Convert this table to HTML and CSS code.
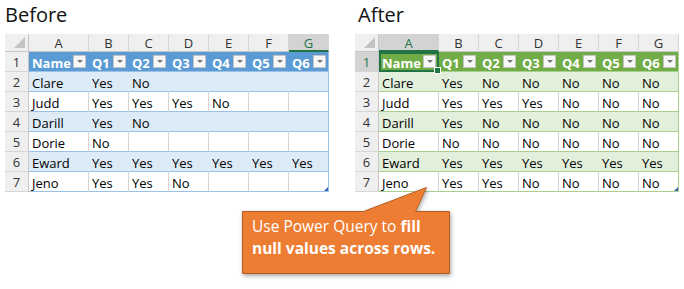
FILE: index.html
```html
<!DOCTYPE html>
<html>
<head>
<meta charset="utf-8">
<link rel="stylesheet" href="styles.css">
</head>
<body>
<div class="page">
  <section class="panel">
    <h2 class="title">Before</h2>
    <div class="sheet blue">
      <div class="corner"></div>
      <div class="ch">A</div><div class="ch">B</div><div class="ch">C</div><div class="ch">D</div><div class="ch">E</div><div class="ch">F</div><div class="ch sel">G</div>

      <div class="rh">1</div>
      <div class="c hd">Name<span class="dd"></span></div><div class="c hd">Q1<span class="dd"></span></div><div class="c hd">Q2<span class="dd"></span></div><div class="c hd">Q3<span class="dd"></span></div><div class="c hd">Q4<span class="dd"></span></div><div class="c hd">Q5<span class="dd"></span></div><div class="c hd last">Q6<span class="dd"></span></div>

      <div class="rh">2</div>
      <div class="c band">Clare</div><div class="c band">Yes</div><div class="c band">No</div><div class="c band"></div><div class="c band"></div><div class="c band"></div><div class="c band last"></div>

      <div class="rh">3</div>
      <div class="c">Judd</div><div class="c">Yes</div><div class="c">Yes</div><div class="c">Yes</div><div class="c">No</div><div class="c"></div><div class="c last"></div>

      <div class="rh">4</div>
      <div class="c band">Darill</div><div class="c band">Yes</div><div class="c band">No</div><div class="c band"></div><div class="c band"></div><div class="c band"></div><div class="c band last"></div>

      <div class="rh">5</div>
      <div class="c">Dorie</div><div class="c">No</div><div class="c"></div><div class="c"></div><div class="c"></div><div class="c"></div><div class="c last"></div>

      <div class="rh">6</div>
      <div class="c band">Eward</div><div class="c band">Yes</div><div class="c band">Yes</div><div class="c band">Yes</div><div class="c band">Yes</div><div class="c band">Yes</div><div class="c band last">Yes</div>

      <div class="rh">7</div>
      <div class="c">Jeno</div><div class="c">Yes</div><div class="c">Yes</div><div class="c">No</div><div class="c"></div><div class="c"></div><div class="c last corner-cell"></div>
    </div>
  </section>

  <section class="panel">
    <h2 class="title after">After</h2>
    <div class="sheet green">
      <div class="corner"></div>
      <div class="ch sel">A</div><div class="ch">B</div><div class="ch">C</div><div class="ch">D</div><div class="ch">E</div><div class="ch">F</div><div class="ch">G</div>

      <div class="rh selrow">1</div>
      <div class="c hd active">Name<span class="dd"></span><span class="handle"></span></div><div class="c hd">Q1<span class="dd"></span></div><div class="c hd">Q2<span class="dd"></span></div><div class="c hd">Q3<span class="dd"></span></div><div class="c hd">Q4<span class="dd"></span></div><div class="c hd">Q5<span class="dd"></span></div><div class="c hd last">Q6<span class="dd"></span></div>

      <div class="rh">2</div>
      <div class="c band">Clare</div><div class="c band">Yes</div><div class="c band">No</div><div class="c band">No</div><div class="c band">No</div><div class="c band">No</div><div class="c band last">No</div>

      <div class="rh">3</div>
      <div class="c">Judd</div><div class="c">Yes</div><div class="c">Yes</div><div class="c">Yes</div><div class="c">No</div><div class="c">No</div><div class="c last">No</div>

      <div class="rh">4</div>
      <div class="c band">Darill</div><div class="c band">Yes</div><div class="c band">No</div><div class="c band">No</div><div class="c band">No</div><div class="c band">No</div><div class="c band last">No</div>

      <div class="rh">5</div>
      <div class="c">Dorie</div><div class="c">No</div><div class="c">No</div><div class="c">No</div><div class="c">No</div><div class="c">No</div><div class="c last">No</div>

      <div class="rh">6</div>
      <div class="c band">Eward</div><div class="c band">Yes</div><div class="c band">Yes</div><div class="c band">Yes</div><div class="c band">Yes</div><div class="c band">Yes</div><div class="c band last">Yes</div>

      <div class="rh">7</div>
      <div class="c">Jeno</div><div class="c">Yes</div><div class="c">Yes</div><div class="c">No</div><div class="c">No</div><div class="c">No</div><div class="c last corner-cell">No</div>
    </div>
  </section>
</div>

<div class="callout">
  <svg class="callout-shape" width="232" height="104" viewBox="0 0 232 104">
    <defs>
      <filter id="sh" x="-10%" y="-10%" width="130%" height="140%">
        <feDropShadow dx="1" dy="2" stdDeviation="2" flood-color="#000" flood-opacity="0.35"/>
      </filter>
    </defs>
    <polygon points="6.5,29.5 127.5,29.5 190.5,5.5 179.5,29.5 213.5,29.5 213.5,91.5 6.5,91.5" fill="#ed7d31" stroke="#b35c22" stroke-width="1" filter="url(#sh)"/>
  </svg>
  <p class="callout-text">Use Power Query to <b>fill</b><br><b>null values across rows.</b></p>
</div>
</body>
</html>
```
FILE: styles.css
```css
html, body {
  margin: 0;
  padding: 0;
  background: #ffffff;
}
body {
  font-family: "Open Sans", "Liberation Sans", sans-serif;
  color: #000;
}
.page {
  display: flex;
  gap: 26px;
  padding-left: 5px;
}
.panel {
  width: 324px;
}
.title {
  margin: 0;
  padding: 1px 0 0 0;
  box-sizing: border-box;
  height: 34px;
  font-size: 20px;
  font-weight: 400;
  line-height: 27px;
  color: #111;
}
.title.after {
  padding-left: 3px;
}
.sheet {
  display: grid;
  grid-template-columns: 24px 60px repeat(6, 40px);
  grid-template-rows: 18px repeat(7, 20px);
  font-size: 13px;
}
.corner {
  background: #efefef;
  border-right: 1px solid #c6c6c6;
  border-bottom: 1px solid #c6c6c6;
  box-sizing: border-box;
  position: relative;
}
.corner::after {
  content: "";
  position: absolute;
  right: 3px;
  bottom: 3px;
  border-left: 11px solid transparent;
  border-bottom: 11px solid #c4c4c4;
}
.ch {
  background: #efefef;
  border-right: 1px solid #d6d6d6;
  border-bottom: 1px solid #c6c6c6;
  box-sizing: border-box;
  text-align: center;
  line-height: 16px;
  padding-top: 1px;
  color: #333;
}
.ch.sel {
  background: #d3d3d3;
  color: #217346;
  border-bottom: 2px solid #217346;
}
.rh {
  background: #efefef;
  border-right: 1px solid #c6c6c6;
  border-bottom: 1px solid #d6d6d6;
  box-sizing: border-box;
  text-align: center;
  line-height: 18px;
  padding-top: 1px;
  color: #333;
}
.rh.selrow {
  background: #d3d3d3;
  color: #217346;
}
.c {
  box-sizing: border-box;
  border-right: 1px solid #d4d4d4;
  border-bottom: 1px solid #9bc2e6;
  padding: 2px 0 0 3px;
  line-height: 18px;
  white-space: nowrap;
  position: relative;
  color: #000;
}
.c.band {
  background: #ddebf7;
  border-right-color: #ddebf7;
}
.c.hd {
  background: #5b9bd5;
  border-right-color: #5b9bd5;
  color: #fff;
  font-weight: 700;
  display: flex;
  justify-content: space-between;
  align-items: flex-start;
  padding-right: 2px;
}
.blue .c.last {
  border-right-color: #9bc2e6;
}
.dd {
  width: 13px;
  height: 13px;
  margin-top: 1px;
  background: #f7f7f7;
  border: 1px solid #c4c4c4;
  box-sizing: border-box;
  position: relative;
}
.dd::after {
  content: "";
  position: absolute;
  left: 2.5px;
  top: 4px;
  border-left: 3.5px solid transparent;
  border-right: 3.5px solid transparent;
  border-top: 3.5px solid #777;
}
.corner-cell::after {
  content: "";
  position: absolute;
  right: 0;
  bottom: 0;
  border-left: 4px solid transparent;
  border-bottom: 4px solid #3f5fbf;
}

/* green table */
.green .c {
  border-bottom-color: #a9d08e;
}
.green .c.band {
  background: #e2efda;
  border-right-color: #e2efda;
}
.green .c.hd {
  background: #70ad47;
  border-right-color: #70ad47;
}
.green .c.last {
  border-right-color: #a9d08e;
}
.c.active {
  outline: 2px solid #217346;
  outline-offset: -2px;
  z-index: 2;
}
.handle {
  position: absolute;
  right: -3px;
  bottom: -3px;
  width: 5px;
  height: 5px;
  background: #217346;
  border: 1px solid #fff;
}

/* callout overlay */
.callout {
  position: absolute;
  left: 236px;
  top: 182px;
  width: 232px;
  height: 104px;
}
.callout-shape {
  position: absolute;
  left: 0;
  top: 0;
}
.callout-text {
  position: absolute;
  left: 16px;
  top: 33px;
  margin: 0;
  color: #fff;
  font-size: 15.5px;
  line-height: 22px;
  white-space: nowrap;
}
```
